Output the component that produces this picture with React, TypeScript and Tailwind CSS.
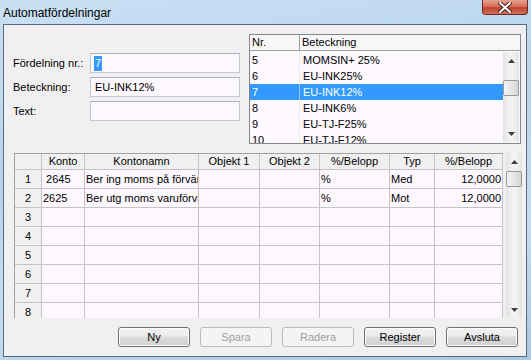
import React from "react";

const cols = [27, 43, 114, 61, 60, 70, 45, 68];

const header = ["", "Konto", "Kontonamn", "Objekt 1", "Objekt 2", "%/Belopp", "Typ", "%/Belopp"];

const rows: string[][] = [
  ["1", " 2645", "Ber ing moms på förvärv", "", "", "%", "Med", "12,0000"],
  ["2", "2625", "Ber utg moms varuförvärv", "", "", "%", "Mot", "12,0000"],
  ["3", "", "", "", "", "", "", ""],
  ["4", "", "", "", "", "", "", ""],
  ["5", "", "", "", "", "", "", ""],
  ["6", "", "", "", "", "", "", ""],
  ["7", "", "", "", "", "", "", ""],
  ["8", "", "", "", "", "", "", ""],
];

const listRows = [
  ["5", "MOMSIN+ 25%"],
  ["6", "EU-INK25%"],
  ["7", "EU-INK12%"],
  ["8", "EU-INK6%"],
  ["9", "EU-TJ-F25%"],
  ["10", "EU-TJ-F12%"],
];

function Arrow({ up }: { up?: boolean }) {
  return (
    <svg width="7" height="4" viewBox="0 0 7 4">
      {up ? <path d="M0 4 L3.5 0 L7 4 Z" fill="#404040" /> : <path d="M0 0 L3.5 4 L7 0 Z" fill="#404040" />}
    </svg>
  );
}

function ScrollBar({ height, thumbTop }: { height: number; thumbTop: number }) {
  return (
    <div
      className="relative w-[16px] bg-[linear-gradient(90deg,#e3e3e3,#f2f2f2_40%,#f2f2f2_60%,#e3e3e3)] flex flex-col items-center"
      style={{ height }}
    >
      <div className="h-[17px] w-full flex items-center justify-center">
        <Arrow up />
      </div>
      <div
        className="absolute left-[0px] w-[16px] h-[16px] rounded-[2px] border border-[#979797] bg-[linear-gradient(90deg,#f5f5f5,#e6e6e6_50%,#d4d4d4)]"
        style={{ top: thumbTop }}
      />
      <div className="flex-1" />
      <div className="h-[17px] w-full flex items-center justify-center">
        <Arrow />
      </div>
    </div>
  );
}

function Btn({ label, disabled }: { label: string; disabled?: boolean }) {
  return (
    <div
      className={
        disabled
          ? "w-[72px] h-[20px] rounded-[3px] border border-[#b9bdc1] bg-[#f4f4f4] text-[#a0a0a0] flex items-center justify-center text-[11px]"
          : "w-[72px] h-[20px] rounded-[3px] border border-[#707070] bg-[linear-gradient(180deg,#f2f2f2_0%,#ebebeb_45%,#dddddd_50%,#cfcfcf_100%)] shadow-[inset_0_0_0_1px_#fcfcfc] text-black flex items-center justify-center text-[11px]"
      }
    >
      {label}
    </div>
  );
}

export default function App() {
  return (
    <div className="w-[531px] h-[360px] flex flex-col bg-[linear-gradient(170deg,#c9e0f4_0%,#b7d3ec_40%,#c3dcf1_70%,#aac8e4_100%)] font-['Liberation_Sans',Arial,sans-serif] text-[11px] text-black overflow-hidden">
      {/* Title bar */}
      <div className="h-[24px] flex relative shrink-0">
        <div className="pl-[3px] pt-[4px] text-[12px] text-black">Automatfördelningar</div>
        <div className="absolute right-[3px] top-0 w-[46px] h-[15px] rounded-b-[4px] border border-t-0 border-[#6a2a22] bg-[linear-gradient(180deg,#e8a290_0%,#d7705d_45%,#c0432f_55%,#d4705a_100%)] flex items-center justify-center">
          <svg width="14" height="11" viewBox="0 0 14 11">
            <path d="M2 1 L12 10 M12 1 L2 10" stroke="#4a2a2a" strokeWidth="4" strokeLinecap="square" />
            <path d="M2 1 L12 10 M12 1 L2 10" stroke="#ffffff" strokeWidth="2" strokeLinecap="square" />
          </svg>
        </div>
      </div>

      {/* Client area */}
      <div className="flex-1 ml-[3px] mr-[4px] mb-[3px] border border-[#5a6b7e] bg-[#f0f0f0] flex flex-col">
        {/* Top section */}
        <div className="flex mt-[9px]">
          <div className="w-[245px] pl-[9px] pt-[19px] flex flex-col gap-[4px]">
            {[
              ["Fördelning nr.:", "7"],
              ["Beteckning:", "EU-INK12%"],
              ["Text:", ""],
            ].map(([label, value], i) => (
              <div key={i} className="flex items-center h-[20px]">
                <div className="w-[77px]">{label}</div>
                <div className="w-[150px] h-[20px] border border-[#c2c9d2] border-t-[#abb3bd] bg-[#fdf8fd] flex items-center pl-[3px]">
                  {i === 0 ? (
                    <span className="bg-[#3399ff] text-white px-[1px] leading-[15px]">{value}</span>
                  ) : (
                    <span className="px-[1px]">{value}</span>
                  )}
                </div>
              </div>
            ))}
          </div>

          {/* List */}
          <div className="w-[272px] h-[110px] border border-[#828790] bg-[#fdf8fd] flex flex-col overflow-hidden">
            <div className="h-[16px] flex border-b border-[#a0a0a0] bg-[#f7f7f7] shrink-0">
              <div className="w-[50px] border-r border-[#a0a0a0] pl-[2px] leading-[15px]">Nr.</div>
              <div className="flex-1 pl-[2px] leading-[15px]">Beteckning</div>
            </div>
            <div className="flex pt-[1px]">
              <div className="w-[253px] flex flex-col">
                {listRows.map(([nr, name], i) => (
                  <div
                    key={nr}
                    className={
                      i === 2
                        ? "h-[16px] flex items-center bg-[#3399ff] text-white"
                        : "h-[16px] flex items-center"
                    }
                  >
                    <div className="w-[49px] pl-[2px]">{nr}</div>
                    <div className={i === 2 ? "flex-1 border-l border-[#9cc8f5] pl-[3px] h-full flex items-center" : "flex-1 border-l border-[#ececec] pl-[3px] h-full flex items-center"}>
                      {name}
                    </div>
                  </div>
                ))}
              </div>
              <ScrollBar height={90} thumbTop={28} />
            </div>
          </div>
        </div>

        {/* Grid */}
        <div className="flex mt-[9px] ml-[10px]">
          <div className="w-[489px] h-[165px] overflow-hidden border-l border-t border-[#a0a0a0]">
            <div className="flex h-[16px]">
              {header.map((h, i) => (
                <div
                  key={i}
                  className="shrink-0 border-r border-b border-[#c4c4c4] bg-[#f0f0f0] flex items-center justify-center"
                  style={{ width: cols[i] }}
                >
                  {h}
                </div>
              ))}
            </div>
            {rows.map((r, ri) => (
              <div key={ri} className="flex h-[19px]">
                {r.map((c, ci) => (
                  <div
                    key={ci}
                    className={
                      ci === 0
                        ? "shrink-0 border-r border-b border-[#c4c4c4] bg-[#f0f0f0] flex items-center justify-center"
                        : ci === 7
                        ? "shrink-0 border-r border-b border-[#c4c4c4] bg-[#fdf8fd] flex items-center justify-end pr-[1px] overflow-hidden whitespace-nowrap"
                        : "shrink-0 border-r border-b border-[#c4c4c4] bg-[#fdf8fd] flex items-center pl-[1px] overflow-hidden whitespace-pre"
                    }
                    style={{ width: cols[ci] }}
                  >
                    {c}
                  </div>
                ))}
              </div>
            ))}
          </div>
          <div className="ml-[3px]">
            <ScrollBar height={165} thumbTop={18} />
          </div>
        </div>

        {/* Buttons */}
        <div className="flex justify-end gap-[10px] pr-[8px] mt-[9px]">
          <Btn label="Ny" />
          <Btn label="Spara" disabled />
          <Btn label="Radera" disabled />
          <Btn label="Register" />
          <Btn label="Avsluta" />
        </div>
      </div>
    </div>
  );
}
